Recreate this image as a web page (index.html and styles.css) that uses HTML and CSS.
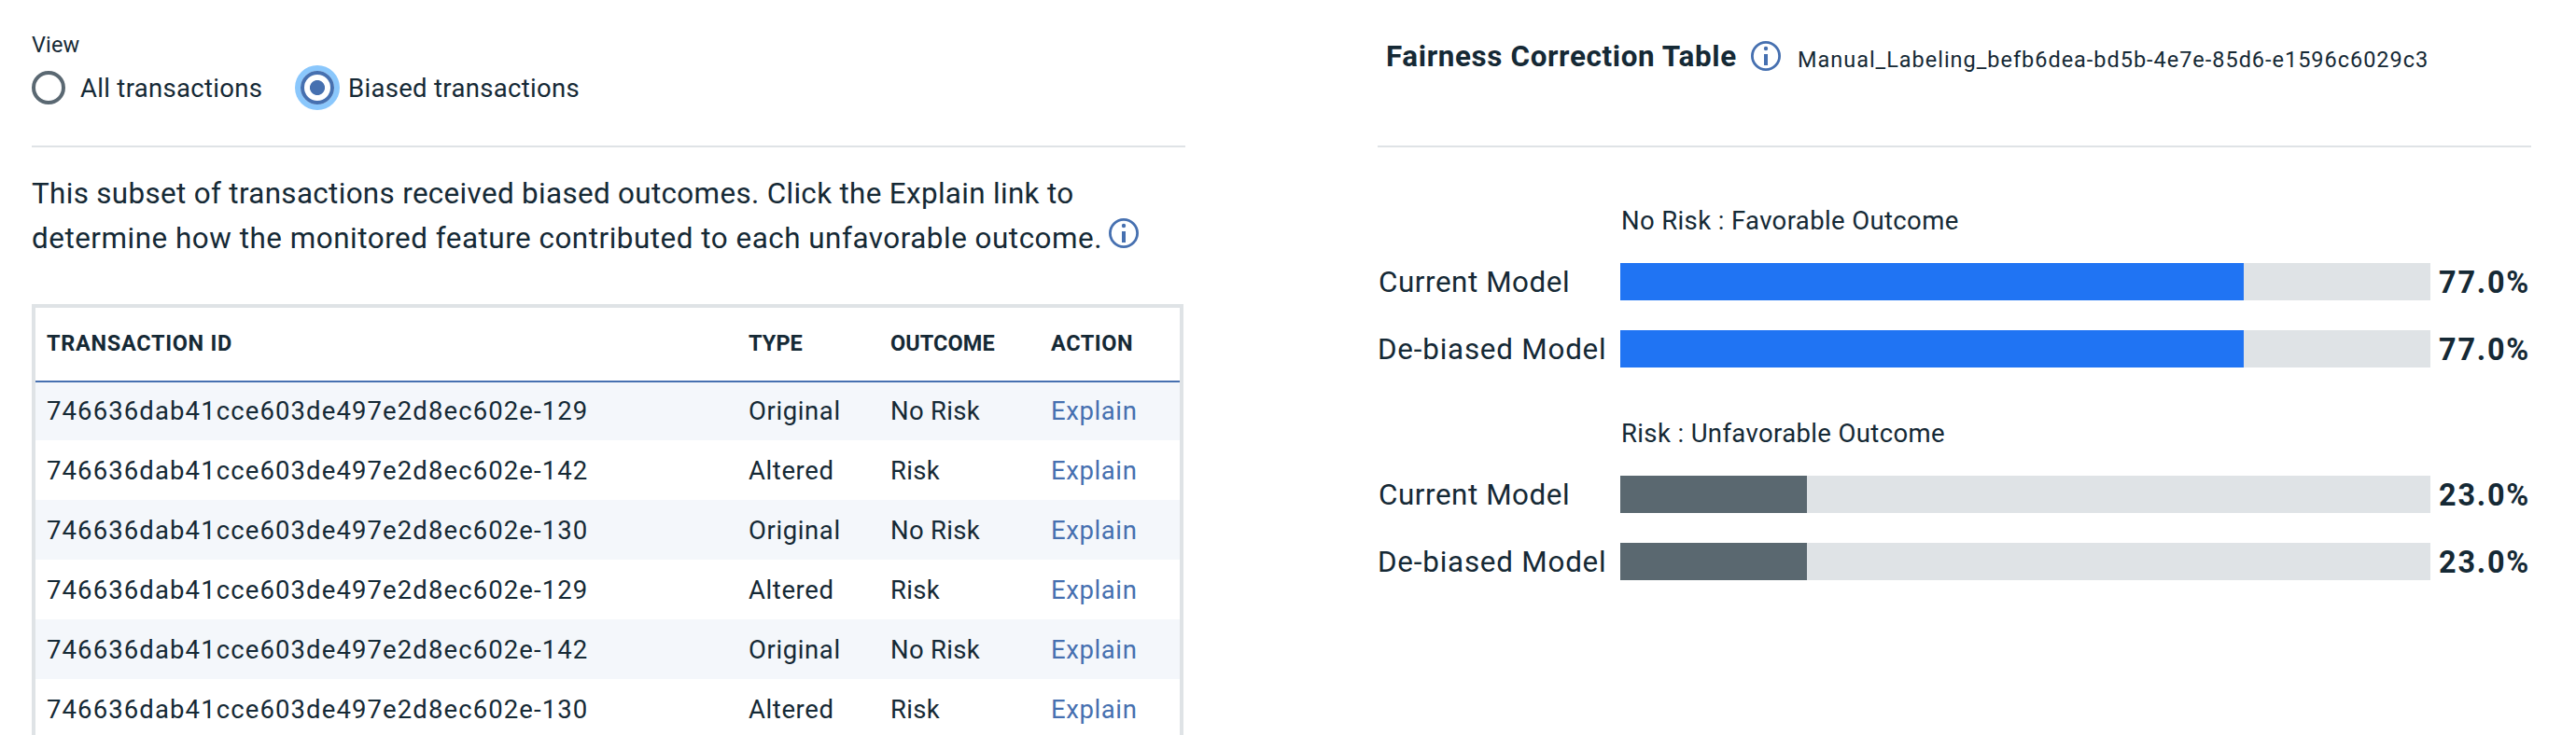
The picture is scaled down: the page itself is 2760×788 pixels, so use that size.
FILE: index.html
```html
<!DOCTYPE html>
<html lang="en">
<head>
<meta charset="utf-8">
<title>Biased transactions</title>
<link rel="stylesheet" href="styles.css">
</head>
<body>
<main class="page">
  <section class="transactions">
    <header class="panel-head">
      <div class="view-label">View</div>
      <div class="radios">
        <label class="radio"><span class="dot"></span><span class="radio-all">All transactions</span></label>
        <label class="radio"><span class="dot dot-on"></span><span class="radio-biased">Biased transactions</span></label>
      </div>
    </header>
    <p class="intro"><span class="line-a">This subset of transactions received biased outcomes. Click the Explain link to</span><br><span class="line-b">determine how the monitored feature contributed to each unfavorable outcome.</span><svg class="info" viewBox="0 0 32 32"><circle cx="16" cy="16" r="14.6"/><circle class="fill" cx="16" cy="8" r="2.2"/><rect class="fill" x="14" y="14" width="4" height="12"/></svg></p>
    <div class="table">
      <div class="tr thead"><span class="th-id">TRANSACTION ID</span><span>TYPE</span><span>OUTCOME</span><span class="th-action">ACTION</span></div>
      <div class="tr first"><span class="id">746636dab41cce603de497e2d8ec602e-129</span><span>Original</span><span class="out">No Risk</span><a>Explain</a></div>
      <div class="tr"><span class="id">746636dab41cce603de497e2d8ec602e-142</span><span>Altered</span><span class="out">Risk</span><a>Explain</a></div>
      <div class="tr"><span class="id">746636dab41cce603de497e2d8ec602e-130</span><span>Original</span><span class="out">No Risk</span><a>Explain</a></div>
      <div class="tr"><span class="id">746636dab41cce603de497e2d8ec602e-129</span><span>Altered</span><span class="out">Risk</span><a>Explain</a></div>
      <div class="tr"><span class="id">746636dab41cce603de497e2d8ec602e-142</span><span>Original</span><span class="out">No Risk</span><a>Explain</a></div>
      <div class="tr"><span class="id">746636dab41cce603de497e2d8ec602e-130</span><span>Altered</span><span class="out">Risk</span><a>Explain</a></div>
    </div>
  </section>
  <section class="fairness">
    <header class="panel-head title-head">
      <h2>Fairness Correction Table</h2>
      <svg class="info" viewBox="0 0 32 32"><circle cx="16" cy="16" r="14.6"/><circle class="fill" cx="16" cy="8" r="2.2"/><rect class="fill" x="14" y="14" width="4" height="12"/></svg>
      <span class="table-name">Manual_Labeling_befb6dea-bd5b-4e7e-85d6-e1596c6029c3</span>
    </header>
    <div class="group">
      <h3>No Risk : Favorable Outcome</h3>
      <div class="bar-row"><span class="current">Current Model</span><div class="track"><div class="bar good" style="width:77%"></div></div><b>77.0%</b></div>
      <div class="bar-row"><span class="debiased">De-biased Model</span><div class="track"><div class="bar good" style="width:77%"></div></div><b>77.0%</b></div>
    </div>
    <div class="group">
      <h3>Risk : Unfavorable Outcome</h3>
      <div class="bar-row"><span class="current">Current Model</span><div class="track"><div class="bar bad" style="width:23%"></div></div><b>23.0%</b></div>
      <div class="bar-row"><span class="debiased">De-biased Model</span><div class="track"><div class="bar bad" style="width:23%"></div></div><b>23.0%</b></div>
    </div>
  </section>
</main>
</body>
</html>
```
FILE: styles.css
```css
* { box-sizing: border-box; }

body {
  margin: 0;
  background: #fff;
  color: #152935;
  font: 27.5px/36px Roboto, "Liberation Sans", sans-serif;
  white-space: nowrap;
}

.page {
  display: grid;
  grid-template-columns: 1236px 1236px;
  column-gap: 206px;
  height: 788px;
  padding-left: 34px;
  overflow: hidden;
}

.panel-head {
  height: 158px;
  border-bottom: 2px solid #dfe3e6;
}

.view-label {
  padding-top: 36px;
  font-size: 23.5px;
  line-height: 24px;
  letter-spacing: 0.12px;
}

.radios {
  display: grid;
  grid-template-columns: 288px auto;
  margin-top: 16px;
}

.radio {
  display: flex;
  gap: 16px;
}

.radio span:last-child { line-height: 37px; }
.radio-all { letter-spacing: 0.3px; }
.radio-biased { letter-spacing: 0.31px; margin-left: -1px; }

.dot {
  width: 36px;
  height: 36px;
  border: 4px solid #5a6872;
  border-radius: 50%;
}

.dot-on {
  border-color: #4670b0;
  background: radial-gradient(circle, #4670b0 7.6px, #fff 8.4px);
  box-shadow: 0 0 0 6px #8ac7fc;
}

.intro {
  margin: 26px 0 46px;
  font-size: 31.4px;
  line-height: 48px;
}

.line-a { letter-spacing: 0.335px; }
.line-b { letter-spacing: 0.52px; }

.info {
  width: 32px;
  height: 32px;
  fill: none;
  stroke: #4670b0;
  stroke-width: 2.8;
}

.info .fill { fill: #4670b0; stroke: none; }
.intro .info { margin-left: 7px; }

.table {
  width: 1234px;
  border: 4px solid #dfe3e6;
  border-bottom: 0;
}

.tr {
  display: grid;
  grid-template-columns: 752px 152px 172px auto;
  align-items: center;
  height: 64px;
  padding: 1px 0 0 12px;
  letter-spacing: 0.6px;
}

.tr:nth-child(even) { background: #f4f7fb; }

.thead {
  height: 80px;
  padding: 0 0 2px 12px;
  border-bottom: 2px solid #4670b0;
  font-size: 23.5px;
  font-weight: 700;
  letter-spacing: 0.05px;
}

.th-id { letter-spacing: 0.69px; }
.th-action { letter-spacing: 0.55px; }
.first { height: 62px; padding-top: 0; }
.id { letter-spacing: 1.105px; }
.out { letter-spacing: 0.3px; }
.tr a { color: #4670b0; }

.title-head {
  display: flex;
  padding: 44px 0 0 9px;
}

h2 {
  width: 391px;
  margin: 0;
  font-size: 31.4px;
  line-height: 34px;
  letter-spacing: 0.62px;
}

.table-name {
  margin-left: 18px;
  font-size: 23.5px;
  line-height: 40px;
  letter-spacing: 0.978px;
}

.group { margin-bottom: 53px; }
.fairness .panel-head { margin-bottom: 61px; }

h3 {
  margin: 0 0 27px;
  padding-left: 261px;
  font-weight: 400;
  font-size: 27.5px;
  line-height: 36px;
  letter-spacing: 0.37px;
}

.bar-row {
  display: grid;
  grid-template-columns: 260px 868px auto;
  height: 40px;
  font-size: 31.4px;
  line-height: 42px;
}

.bar-row + .bar-row { margin-top: 32px; }
.current { padding-left: 1px; letter-spacing: 0.55px; }
.debiased { letter-spacing: 0.77px; }

.track {
  height: 40px;
  background: #dfe3e6;
}

.bar { height: 100%; }
.good { background: #2074f3; }
.bad { background: #5a6870; }

.bar-row b {
  padding-left: 9px;
  font-size: 32.4px;
  letter-spacing: 1.8px;
}
```
